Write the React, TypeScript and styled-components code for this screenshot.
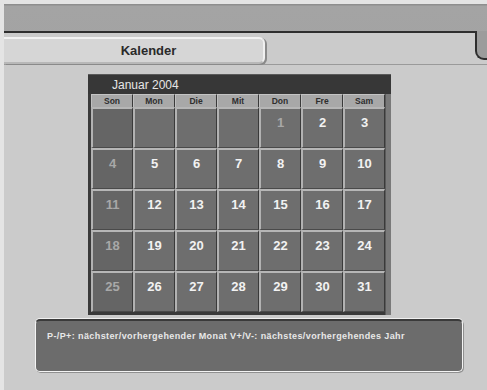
import * as React from "react";
import styled, { createGlobalStyle } from "styled-components";

const GlobalStyle = createGlobalStyle`
  html, body {
    margin: 0;
    padding: 0;
    background: #e4e4e4;
  }
  * {
    box-sizing: border-box;
  }
`;

const Screen = styled.div`
  width: 487px;
  height: 390px;
  padding: 4px 0 0 4px;
  background: #e4e4e4;
  overflow: hidden;
  font-family: "Liberation Sans", Arial, sans-serif;
`;

const Frame = styled.div`
  height: 100%;
  padding-top: 27px;
  background: linear-gradient(#8e8e8e 0, #8e8e8e 1px, #a4a4a4 2px, #9a9a9a 100%);
`;

const Panel = styled.div`
  height: 100%;
  background: #cbcbcb;
  border-top: 2px solid #2e2e2e;
`;

const HeaderRow = styled.div`
  display: flex;
  align-items: flex-start;
  justify-content: space-between;
  border-bottom: 1px solid #9a9a9a;
`;

const Tab = styled.div`
  width: 261px;
  height: 27px;
  margin-top: 4px;
  display: flex;
  align-items: center;
  justify-content: center;
  padding-left: 30px;
  background: #d6d6d6;
  border-top: 2px solid #f2f2f2;
  border-right: 2px solid #f0f0f0;
  border-bottom: 2px solid #b8b8b8;
  border-radius: 0 6px 6px 0;
  box-shadow: 2px 1px 0 #8a8a8a;
  font-size: 13px;
  font-weight: bold;
  color: #2a2a2a;
`;

const Ear = styled.div`
  width: 12px;
  height: 29px;
  margin-top: -2px;
  background: #9c9c9c;
  border-left: 2px solid #2e2e2e;
  border-bottom: 2px solid #2e2e2e;
  border-bottom-left-radius: 9px;
`;

const Calendar = styled.div`
  width: 303px;
  margin: 9px 0 0 84px;
  background: #3a3a3a;
`;

const MonthBar = styled.div`
  height: 20px;
  padding: 3px 0 0 24px;
  font-size: 12px;
  color: #e6e6e6;
  background: #373737;
  border-top: 1px solid #5a5a5a;
`;

const Grid = styled.div`
  display: grid;
  grid-template-columns: repeat(7, 42px);
  padding: 0 6px 3px 3px;
  background: linear-gradient(90deg, #3a3a3a 0, #3a3a3a 297px, #7a7a7a 298px, #7a7a7a 100%);
`;

const DayName = styled.div`
  height: 13px;
  display: flex;
  align-items: center;
  justify-content: center;
  background: #a8a8a8;
  border-top: 1px solid #c4c4c4;
  border-left: 1px solid #c0c0c0;
  border-right: 1px solid #3a3a3a;
  font-size: 8.5px;
  font-weight: bold;
  color: #2e2e2e;
`;

const Cell = styled.div<{ $sunday?: boolean }>`
  height: 41px;
  padding-top: 4px;
  text-align: center;
  background: ${(p) => (p.$sunday ? "#656565" : "#6e6e6e")};
  border-top: 2px solid #b6b6b6;
  border-left: 2px solid #b2b2b2;
  border-right: 1px solid #3a3a3a;
  border-bottom: 1px solid #4a4a4a;
`;

const DayNumber = styled.span<{ $dim?: boolean }>`
  font-size: 13px;
  font-weight: bold;
  color: ${(p) => (p.$dim ? "#a8a8a8" : "#f2f2f2")};
`;

const InfoBox = styled.div`
  width: 428px;
  height: 53px;
  margin: 4px 0 0 31px;
  padding: 10px 0 0 11px;
  background: #6c6c6c;
  border: 1px solid #f4f4f4;
  border-top: 2px solid #3a3a3a;
  border-radius: 5px;
  box-shadow: 0 -1px 0 #f0f0f0, 1px 1px 0 #909090;
  font-size: 9px;
  letter-spacing: 0.4px;
  font-weight: bold;
  color: #e8e8e8;
  white-space: nowrap;
`;

const dayNames = ["Son", "Mon", "Die", "Mit", "Don", "Fre", "Sam"];

// Januar 2004 starts on a Thursday (column 4)
const cells: (number | null)[] = [
  null, null, null, null,
  ...Array.from({ length: 31 }, (_, i) => i + 1),
];

const holidays = [1];

const App: React.FC = () => {
  return (
    <>
      <GlobalStyle />
      <Screen>
        <Frame>
          <Panel>
            <HeaderRow>
              <Tab>Kalender</Tab>
              <Ear />
            </HeaderRow>

            <Calendar>
              <MonthBar>Januar 2004</MonthBar>
              <Grid>
                {dayNames.map((name) => (
                  <DayName key={name}>{name}</DayName>
                ))}
                {cells.map((day, index) => {
                  const sunday = index % 7 === 0;
                  return (
                    <Cell key={index} $sunday={sunday}>
                      {day && (
                        <DayNumber $dim={sunday || holidays.includes(day)}>
                          {day}
                        </DayNumber>
                      )}
                    </Cell>
                  );
                })}
              </Grid>
            </Calendar>

            <InfoBox>
              P-/P+: nächster/vorhergehender Monat V+/V-: nächstes/vorhergehendes Jahr
            </InfoBox>
          </Panel>
        </Frame>
      </Screen>
    </>
  );
};

export default App;
